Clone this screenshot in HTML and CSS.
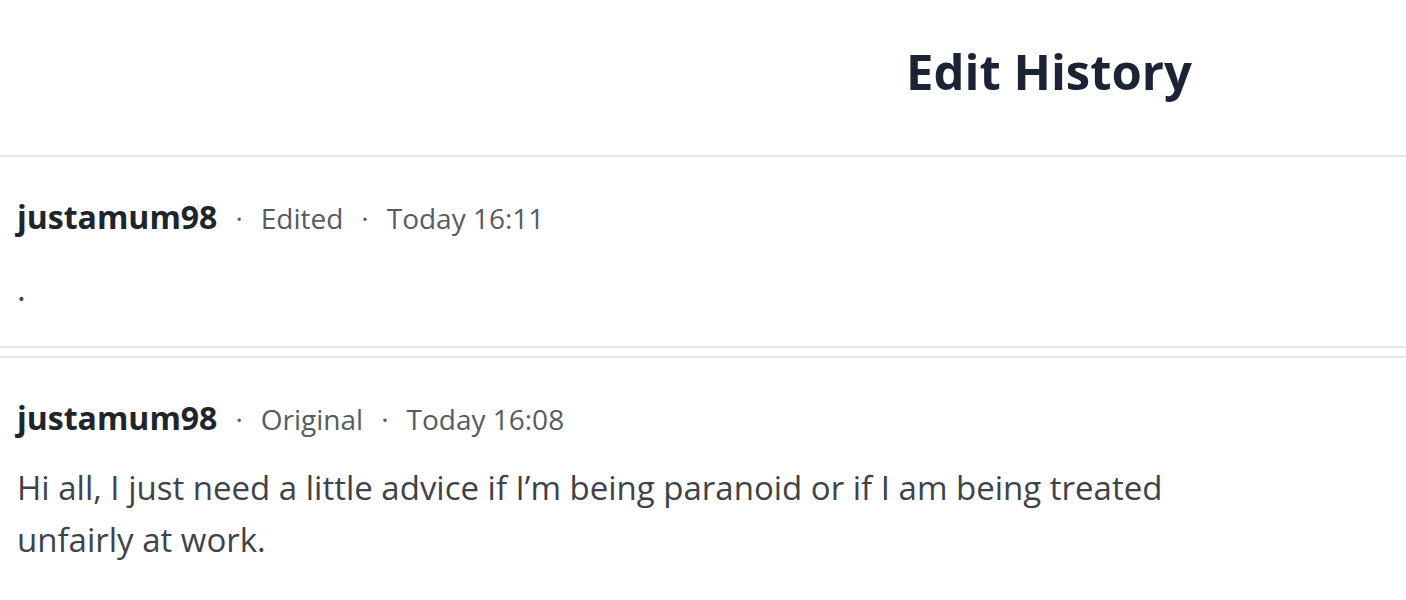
FILE: index.html
```html
<!DOCTYPE html>
<html>
<head>
<meta charset="utf-8">
<link rel="stylesheet" href="styles.css">
</head>
<body>
<div class="page">
  <header class="header">
    <h1 class="title">Edit History</h1>
  </header>
  <section class="entry entry-first">
    <div class="meta"><span class="user">justamum98</span><span class="sep">·</span><span class="info">Edited</span><span class="sep">·</span><span class="info">Today 16:11</span></div>
    <p class="body body-short">.</p>
  </section>
  <section class="entry entry-second">
    <div class="meta"><span class="user">justamum98</span><span class="sep">·</span><span class="info">Original</span><span class="sep">·</span><span class="info">Today 16:08</span></div>
    <p class="body">Hi all, I just need a little advice if I’m being paranoid or if I am being treated<br>unfairly at work.</p>
  </section>
</div>
</body>
</html>
```
FILE: styles.css
```css
html, body {
  margin: 0;
  padding: 0;
  background: #ffffff;
}
body {
  font-family: "Open Sans", "Noto Sans", sans-serif;
  width: 1406px;
  height: 600px;
  overflow: hidden;
}
.header {
  height: 157px;
  box-sizing: border-box;
  border-bottom: 2px solid #e6e6e6;
  display: flex;
  align-items: flex-start;
  padding-top: 47px;
  padding-left: 906px;
}
.title {
  margin: 0;
  font-size: 49px;
  font-weight: 700;
  color: #1b2335;
  line-height: 1;
}
.entry {
  padding-left: 17px;
}
.entry-first {
  height: 191px;
  box-sizing: border-box;
  border-bottom: 2px solid #e6e6e6;
  padding-top: 40px;
}
.entry-second {
  border-top: 2px solid #e6e6e6;
  margin-top: 8px;
  padding-top: 40px;
}
.meta {
  display: flex;
  align-items: baseline;
  font-size: 28px;
  line-height: 40px;
  color: #575b63;
}
.user {
  font-size: 32px;
  font-weight: 700;
  color: #20242d;
}
.sep {
  margin: 0 18px;
}
.body {
  margin: 0;
  font-size: 33px;
  line-height: 52px;
  color: #3e424a;
}
.body-short {
  margin-top: 25px;
}
.entry-second .body {
  margin-top: 23px;
}
```
